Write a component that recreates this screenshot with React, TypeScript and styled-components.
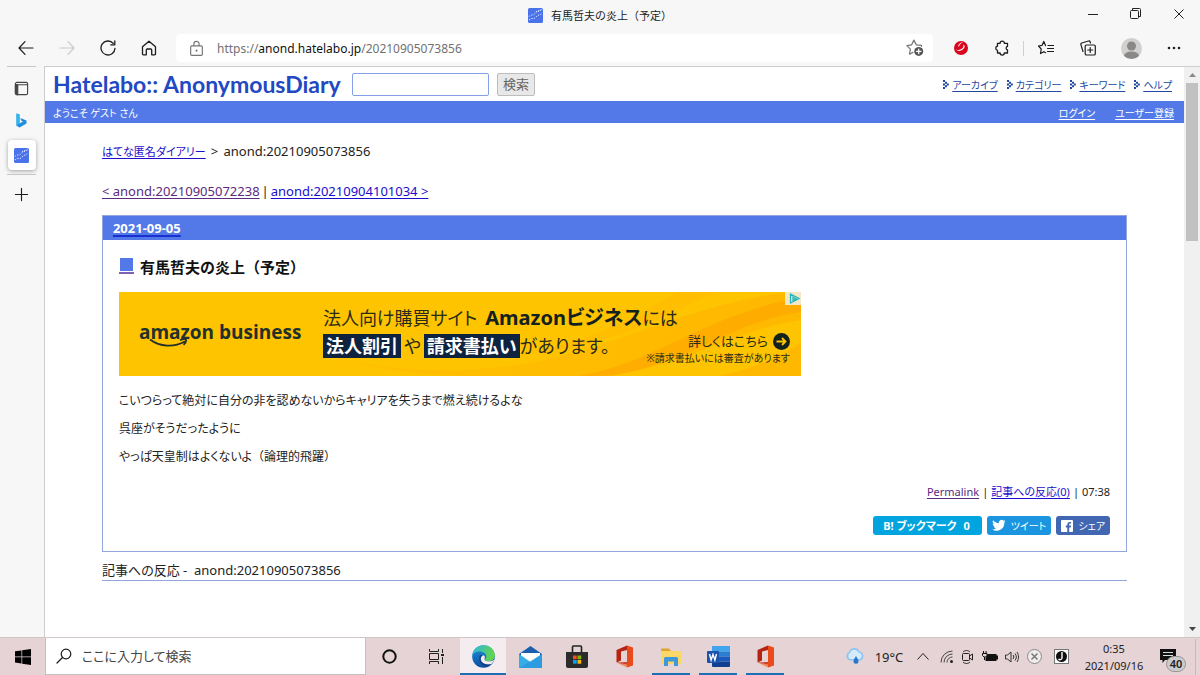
import React from "react";
import styled, { createGlobalStyle, css } from "styled-components";

const GlobalStyle = createGlobalStyle`
  *, *::before, *::after { box-sizing: border-box; }
  html, body { margin: 0; }
  body {
    font-family: "Noto Sans", "Noto Sans CJK JP", sans-serif;
    font-size: 13px;
    color: #222;
    font-feature-settings: "palt";
  }
  button, input {
    font: inherit;
    font-feature-settings: inherit;
    color: inherit;
  }
  svg { display: block; flex: none; }
  p, h1, h2, h3 { margin: 0; }
`;

const BLUE = "#5279e7";
const LINE = "#93a6dc";

/* ---------- browser frame ---------- */

const Screen = styled.div`
  display: flex;
  flex-direction: column;
  min-height: 100vh;
  background: #f7f7f7;
`;

const TitleBar = styled.header`
  display: grid;
  grid-template-columns: 1fr auto 1fr;
  align-items: center;
  height: 30px;
`;

const TabTitle = styled.div`
  grid-column: 2;
  display: flex;
  align-items: center;
  gap: 8px;
  font-size: 11px;
  font-feature-settings: normal;
`;

const WindowControls = styled.div`
  display: flex;
  justify-content: flex-end;
  padding-bottom: 3px;
`;

const WindowButton = styled.button`
  display: grid;
  place-items: center;
  width: 43px;
  height: 26px;
  padding: 0;
  border: 0;
  background: none;
`;

const Toolbar = styled.div`
  display: flex;
  align-items: center;
  height: 36px;
  padding: 0 5px;
`;

const ToolButton = styled.button<{ $w?: number }>`
  display: grid;
  place-items: center;
  flex: none;
  width: ${(p) => p.$w ?? 41}px;
  height: 28px;
  padding: 0;
  border: 0;
  background: none;
`;

const AddressBar = styled.div`
  display: flex;
  align-items: center;
  flex: 1;
  height: 28px;
  margin: 0 7px;
  padding: 0 9px 0 12px;
  border-radius: 4px;
  background: #fff;
`;

const Url = styled.div`
  flex: 1;
  padding-left: 12px;
  font-size: 12px;
  color: #717171;
  outline: 0;
  b { font-weight: 400; color: #111; }
`;

const Divider = styled.span`
  width: 1px;
  height: 15px;
  margin: 0 1px;
  background: #d0d0d0;
`;

const Body = styled.div`
  display: flex;
  flex: 1;
`;

const SideTabs = styled.nav`
  display: flex;
  flex-direction: column;
  align-items: center;
  flex: none;
  width: 43px;
`;

const SideRule = styled.span<{ $after: number }>`
  width: 29px;
  height: 1px;
  margin-bottom: ${(p) => p.$after}px;
  background: #c6c6c6;
`;

const SideTab = styled.button<{ $active?: boolean }>`
  display: grid;
  place-items: center;
  width: 28px;
  height: 32px;
  padding: 0;
  border: 0;
  border-radius: 4px;
  background: none;
  ${(p) =>
    p.$active &&
    css`
      height: 30px;
      margin: 4px 0;
      background: #fff;
      box-shadow: 0 1px 4px rgba(0, 0, 0, 0.35);
    `}
`;

/* ---------- web page ---------- */

const Page = styled.main`
  flex: 1;
  min-width: 0;
  margin-left: 1px;
  border-top: 1px solid #cdcdcd;
  border-left: 1px solid #cdcdcd;
  background: #fff;
`;

const SiteHeader = styled.div`
  display: flex;
  align-items: center;
  height: 34px;
  padding: 0 12px 0 8px;
`;

const Logo = styled.h1`
  min-width: 288px;
  font-family: Lato, sans-serif;
  font-size: 23px;
  line-height: 32px;
  font-weight: 700;
  color: #2248c2;
  white-space: nowrap;
`;

const SearchForm = styled.form`
  display: flex;
  gap: 8px;
  margin-left: 11px;
`;

const SearchInput = styled.input`
  width: 137px;
  height: 23px;
  padding: 0 4px;
  border: 1px solid #84a0ea;
  border-radius: 2px;
  background: #fff;
`;

const SearchButton = styled.button`
  height: 23px;
  padding: 0 5px;
  border: 1px solid #bdbdbd;
  border-radius: 2px;
  background: #e8e8e8;
  color: #666;
  line-height: 20px;
`;

const Menu = styled.nav`
  display: flex;
  gap: 8px;
  margin-left: auto;
  font-size: 10px;
`;

const MenuItem = styled.span`
  display: flex;
  align-items: center;
  gap: 3px;
`;

const Link = styled.a<{ $tone?: "blue" | "navy" | "visited" | "white" }>`
  color: ${(p) =>
    ({ blue: "#1a0dcc", navy: "#23489f", visited: "#5a2a80", white: "#fff" })[p.$tone ?? "blue"]};
  text-decoration: underline;
  text-underline-offset: 2px;
`;

const WelcomeBar = styled.div`
  display: flex;
  align-items: center;
  gap: 20px;
  height: 22px;
  padding: 0 10px 0 8px;
  background: ${BLUE};
  color: #fff;
  font-size: 10px;
  span { margin-right: auto; }
`;

const Content = styled.div`
  padding: 18px 5% 24px;
`;

const TextLine = styled.div<{ $after: number }>`
  display: flex;
  align-items: center;
  gap: 2px;
  height: 20px;
  margin-bottom: ${(p) => p.$after}px;
  white-space: pre;
`;

const Crumb = styled.span`
  padding-right: 3px;
  font-size: 11px;
`;

const Day = styled.section`
  border: 1px solid ${LINE};
`;

const DayTitle = styled.h2`
  display: flex;
  align-items: center;
  height: 24px;
  padding: 0 10px;
  background: ${BLUE};
  font-size: 13px;
  a {
    color: #fff;
    text-decoration: underline #1a2fd0 2px;
    text-underline-offset: 2px;
  }
`;

const Entry = styled.article`
  padding: 12px 16px 16px;
`;

const EntryTitle = styled.h3`
  display: flex;
  align-items: center;
  gap: 6px;
  height: 28px;
  margin-bottom: 12px;
  font-size: 15px;
  font-weight: 700;
  color: #111;
  font-feature-settings: normal;
`;

const Marker = styled.a`
  display: block;
  width: 15px;
  padding: 0 1px 1px;
  border-bottom: 2px solid #7d63b8;
  &::before {
    content: "";
    display: block;
    height: 13px;
    background: ${BLUE};
  }
`;

const Paragraph = styled.p`
  font-size: 12px;
  line-height: 28px;
`;

const FullWidth = styled.span`
  font-feature-settings: normal;
`;

const EntryFooter = styled.div`
  display: flex;
  justify-content: flex-end;
  align-items: center;
  gap: 3px;
  height: 20px;
  margin: 10px 0 15px;
  font-size: 11px;
`;

const ShareRow = styled.div`
  display: flex;
  justify-content: flex-end;
  gap: 5px;
`;

const ShareButton = styled.button<{ $bg: string; $strong?: boolean }>`
  display: flex;
  align-items: center;
  gap: 5px;
  height: 19px;
  padding: 0 ${(p) => (p.$strong ? 10 : 5)}px;
  border: 0;
  border-radius: 3px;
  background: ${(p) => p.$bg};
  color: #fff;
  font-size: ${(p) => (p.$strong ? 11 : 10)}px;
  font-weight: ${(p) => (p.$strong ? 700 : 400)};
  line-height: 18px;
  white-space: nowrap;
`;

const Count = styled.span`
  padding: 0 2px;
`;

const Reactions = styled.div`
  display: flex;
  align-items: center;
  height: 29px;
  padding-top: 7px;
  border-bottom: 1px solid ${LINE};
  white-space: pre;
`;

/* ---------- banner ---------- */

const Banner = styled.a`
  position: relative;
  display: grid;
  grid-template-columns: 204px 1fr;
  align-items: center;
  width: 100%;
  max-width: 682px;
  height: 84px;
  margin-bottom: 11px;
  background: #ffc400;
  color: #2a2b1a;
  text-decoration: none;
  white-space: nowrap;
`;

const BannerArt = styled.svg`
  position: absolute;
  inset: 0;
  width: 100%;
  height: 100%;
`;

const BrandMark = styled.div`
  position: relative;
  padding: 0 0 4px 20px;
  font-family: "Open Sans", sans-serif;
  font-size: 19px;
  line-height: 28px;
  font-weight: 700;
  color: #23302c;
`;

const Smile = styled.svg`
  position: absolute;
  left: 30px;
  top: 20px;
`;

const Copy = styled.div`
  position: relative;
  padding: 0 11px 4px 0;
`;

const CopyLine = styled.div`
  display: flex;
  align-items: center;
  height: 28px;
  font-size: 18px;
  line-height: 26px;
  b { padding-left: 8px; font-size: 20px; color: #14221f; }
`;

const Chip = styled.strong`
  padding: 0 3px;
  background: #0d2340;
  color: #fff;
  line-height: 24px;
`;

const Particle = styled.span`
  padding: 0 3px;
`;

const CallToAction = styled.div`
  display: flex;
  flex-direction: column;
  align-items: flex-end;
  align-self: flex-start;
  margin-left: auto;
  font-size: 10px;
  line-height: 16px;
`;

const CtaLink = styled.span`
  display: flex;
  align-items: center;
  gap: 5px;
  font-size: 13px;
  line-height: 18px;
`;

const AdChoice = styled.svg`
  position: absolute;
  right: 0;
  top: 0;
`;

/* ---------- scroll bar ---------- */

const ScrollBar = styled.div`
  display: flex;
  flex-direction: column;
  align-items: center;
  justify-content: space-between;
  flex: none;
  width: 16px;
  padding: 6px 0;
  border-top: 1px solid #cdcdcd;
  background: #f0f0f0;
`;

const Thumb = styled.span`
  flex: 0 1 158px;
  width: 12px;
  margin: 6px 0 auto;
  background: #c1c1c1;
`;

/* ---------- task bar ---------- */

const TaskBar = styled.footer`
  display: flex;
  align-items: stretch;
  height: 38px;
  border-top: 1px solid #cfc6c8;
  background: #e5d3d5;
`;

const Tile = styled.button<{ $state?: "open" | "active" }>`
  display: grid;
  place-items: center;
  flex: none;
  width: 46px;
  margin-right: 1px;
  padding: 0;
  border: 0;
  background: ${(p) => (p.$state === "active" ? "#f4ecee" : "none")};
  ${(p) =>
    p.$state &&
    css`
      background-image: linear-gradient(#1f6fb5, #1f6fb5);
      background-repeat: no-repeat;
      background-position: center bottom;
      background-size: ${p.$state === "active" ? "100%" : "38px"} 2px;
    `}
`;

const TaskSearch = styled.label`
  display: flex;
  align-items: center;
  gap: 10px;
  flex: 0 1 321px;
  margin-left: -2px;
  padding: 0 10px;
  border: 1px solid #c4bfc0;
  border-top: 0;
  background: #fff;
`;

const TaskInput = styled.input`
  flex: 1;
  min-width: 0;
  padding: 0;
  border: 0;
  outline: 0;
  &::placeholder { color: #444; opacity: 1; }
`;

const Tray = styled.div`
  display: flex;
  align-items: center;
  margin-left: auto;
  padding-right: 4px;
`;

const TrayButton = styled.button<{ $w: number }>`
  display: flex;
  align-items: center;
  justify-content: center;
  gap: 10px;
  flex: none;
  width: ${(p) => p.$w}px;
  height: 36px;
  padding: 0;
  border: 0;
  background: none;
  white-space: nowrap;
`;

const Clock = styled.time`
  width: 72px;
  font-size: 11px;
  line-height: 17px;
  text-align: center;
`;

const Notice = styled.button`
  position: relative;
  width: 46px;
  height: 36px;
  padding: 0 0 0 10px;
  border: 0;
  border-right: 1px solid #c9b8ba;
  background: none;
`;

const Badge = styled.span`
  position: absolute;
  left: 16px;
  top: 17px;
  width: 20px;
  border: 1px solid #999;
  border-radius: 8px;
  background: #ccc;
  font-size: 11px;
  line-height: 14px;
  font-weight: 600;
`;

/* ---------- icons ---------- */

const Favicon = () => (
  <svg width="15" height="15" viewBox="0 0 15 15">
    <rect width="15" height="15" rx="1.5" fill="#4a72ea" />
    <g fill="none" stroke="#dbe4ff" strokeWidth="1" strokeDasharray="1.4 1.200">
      <path d="M1 8.500c2-3 4 0 6-3s4-1 7-4" />
      <path d="M1 12c3-3 5 0 7-3s4-1 6-4" />
      <path d="M8 4c2-2 3-1 5.500-2.500" />
    </g>
  </svg>
);

const Stroke = ({
  d,
  size = 16,
  color = "#1c1c1c",
  w = 1.2,
  children,
}: {
  d: string;
  size?: number;
  color?: string;
  w?: number;
  children?: React.ReactNode;
}) => (
  <svg width={size} height={size} viewBox="0 0 16 16" fill="none" stroke={color} strokeWidth={w} strokeLinecap="round" strokeLinejoin="round">
    <path d={d} />
    {children}
  </svg>
);

const OfficeIcon = () => (
  <svg width="19" height="23" viewBox="0 0 19 23">
    <path d="M12 .5 1.500 5v12.500l4.500-2V6.600l6-1.700z" fill="#b32413" />
    <path d="M12 .5 18 2.500v18l-6 2z" fill="#ea4b1c" />
    <path d="M1.500 17.500 12 22.500v-4z" fill="#f08a64" />
    <path d="m1.500 17.500 10.500-.6v2.600z" fill="#c9412c" />
  </svg>
);

const MenuMark = () => (
  <svg width="7" height="9" viewBox="0 0 7 9" fill="#23489f">
    <path d="M1 0h2v2H1zM3 1.800h2v2H3zM4.800 3.500h2v2h-2zM3 5.200h2v2H3zM1 7h2v2H1zM1 3.500h2v2H1z" />
  </svg>
);

export default function App() {
  return (
    <Screen>
      <GlobalStyle />
      <TitleBar>
        <TabTitle>
          <Favicon />
          有馬哲夫の炎上（予定）
        </TabTitle>
        <WindowControls>
          <WindowButton aria-label="最小化">
            <svg width="10" height="10"><path d="M0 5.500h10" stroke="#222" /></svg>
          </WindowButton>
          <WindowButton aria-label="元に戻す">
            <svg width="11" height="11" fill="none" stroke="#222">
              <rect x=".5" y="2.500" width="8" height="8" rx="1" />
              <path d="M2.500 2.500V.5h7a1 1 0 0 1 1 1v7h-2" />
            </svg>
          </WindowButton>
          <WindowButton aria-label="閉じる">
            <svg width="10" height="10"><path d="m.5.5 9 9m0-9-9 9" stroke="#222" /></svg>
          </WindowButton>
        </WindowControls>
      </TitleBar>

      <Toolbar>
        <ToolButton aria-label="戻る"><Stroke d="M15 8H1m6-6.300L1 8l6 6.300" /></ToolButton>
        <ToolButton aria-label="進む"><Stroke color="#c9c9c9" d="M1 8h14M9 1.700 15 8l-6 6.300" /></ToolButton>
        <ToolButton aria-label="更新"><Stroke w={1.3} d="M15 8.300a7 7 0 1 1-1.800-5M14.800.8v4h-4" /></ToolButton>
        <ToolButton aria-label="ホーム"><Stroke w={1.3} d="M1.500 6.800 8 1.200l6.500 5.600v7.200a.8.8 0 0 1-.8.8h-3V10a1 1 0 0 0-1-1H6.300a1 1 0 0 0-1 1v4.800h-3a.8.8 0 0 1-.8-.8z" /></ToolButton>
        <AddressBar>
          <Stroke color="#777" w={1.1} size={17} d="M3.500 5.500h9a1 1 0 0 1 1 1v7a1 1 0 0 1-1 1h-9a1 1 0 0 1-1-1v-7a1 1 0 0 1 1-1zM5.500 5.500V3.800a2.500 2.500 0 0 1 5 0v1.700">
            <circle cx="8" cy="10" r=".4" />
          </Stroke>
          <Url role="textbox" aria-label="アドレス" contentEditable suppressContentEditableWarning spellCheck={false}>
            https://<b>anond.hatelabo.jp</b>/20210905073856
          </Url>
          <Stroke color="#777" size={18} w={1.1} d="M13.800 6.500v-.8L9.200 5.200 7 1 5 5.200.8 5.900 3.900 9l-.8 4.500 3-1.600">
            <circle cx="11.300" cy="11" r="4" fill="#555" stroke="none" />
            <path d="M11.300 9v4m-2-2h4" stroke="#fff" />
          </Stroke>
        </AddressBar>
        <ToolButton aria-label="セキュリティ">
          <svg width="14" height="14" viewBox="0 0 14 14">
            <circle cx="7" cy="7" r="7" fill="#d9051d" />
            <path d="M1.500 7.500C3 9.500 5 9.500 7 8.300 9.500 6.800 10 5 9 3.500c2 .8 2.200 2.500.5 4.300C7 10.500 3.500 11 1.500 7.500z" fill="#fff" />
            <path d="M4 5.500C4.500 3 6.500 1.500 9 1c-1.800 1.200-3.500 2.500-4 4.500z" fill="#fff" />
          </svg>
        </ToolButton>
        <ToolButton aria-label="拡張機能">
          <Stroke w={1.3} d="M3.500 3.300h2.600a2.100 2.100 0 0 1 4.200 0h3.200v3.100a1.800 1.800 0 0 0 0 3.500v3.100h-3.200a2.100 2.100 0 0 1-4.200 0H3.500v-2.700a2.200 2.200 0 0 1 0-4.300z" />
        </ToolButton>
        <Divider />
        <ToolButton $w={42} aria-label="お気に入り">
          <Stroke w={1.2} d="M7.500 5.600 5.800 1.400 4 5.400l-3.500.6 2.700 3-.7 4.600 3.300-1.900 1.700 1M10 5.500h5.500M9.500 8.500h6M9.500 11.500h6" />
        </ToolButton>
        <ToolButton $w={42} aria-label="コレクション">
          <Stroke w={1.2} d="M6.500 5h7.500a1.300 1.300 0 0 1 1.300 1.300v7.400A1.300 1.300 0 0 1 14 15H6.500a1.300 1.300 0 0 1-1.300-1.300V6.300A1.300 1.300 0 0 1 6.500 5zM10.200 7.500v5M7.700 10h5M3 11.500 .9 4.600a1.300 1.300 0 0 1 .9-1.600L8.500 1a1.300 1.300 0 0 1 1.600.8l.4 1.200" />
        </ToolButton>
        <ToolButton $w={44} aria-label="プロフィール">
          <svg width="21" height="21" viewBox="0 0 21 21">
            <clipPath id="avatar"><circle cx="10.500" cy="10.500" r="10.500" /></clipPath>
            <g clipPath="url(#avatar)">
              <rect width="21" height="21" fill="#d2d0ce" />
              <circle cx="10.500" cy="8" r="4.500" fill="#8a8886" />
              <ellipse cx="10.500" cy="18" rx="7.500" ry="4.500" fill="#8a8886" />
            </g>
          </svg>
        </ToolButton>
        <ToolButton $w={42} aria-label="設定">
          <svg width="14" height="4" fill="#222"><circle cx="2" cy="2" r="1.300" /><circle cx="7" cy="2" r="1.300" /><circle cx="12" cy="2" r="1.300" /></svg>
        </ToolButton>
      </Toolbar>

      <Body>
        <SideTabs>
          <SideRule $after={5} />
          <SideTab aria-label="タブ操作">
            <Stroke size={15} w={1.2} color="#444" d="M3 1.500h10A1.500 1.500 0 0 1 14.500 3v10a1.500 1.500 0 0 1-1.500 1.500H3A1.500 1.500 0 0 1 1.500 13V3A1.500 1.500 0 0 1 3 1.500zM1.500 4h13">
              <path d="M1.500 4h2.500v10.500H3L1.500 13z" fill="#444" />
            </Stroke>
          </SideTab>
          <SideTab aria-label="Bing">
            <svg width="11" height="15" viewBox="0 0 11 15">
              <path d="M.5.5 3.500 1.600v8.900L7 8.600 5.300 7.800 4.200 5l6.300 2.400v3.200L3.600 14.500.5 12.800z" fill="#1f8fe0" />
              <path d="M.5.5 3.500 1.600v8.900L.5 12.800z" fill="#2fb5ea" />
            </svg>
          </SideTab>
          <SideTab $active aria-label="有馬哲夫の炎上（予定）"><Favicon /></SideTab>
          <SideRule $after={3} />
          <SideTab aria-label="新しいタブ"><Stroke size={15} d="M8 1.500v13M1.500 8h13" /></SideTab>
        </SideTabs>

        <Page>
          <SiteHeader>
            <Logo>Hatelabo:: AnonymousDiary</Logo>
            <SearchForm onSubmit={(e) => e.preventDefault()}>
              <SearchInput type="text" aria-label="検索" />
              <SearchButton type="submit">検索</SearchButton>
            </SearchForm>
            <Menu>
              {["アーカイブ", "カテゴリー", "キーワード", "ヘルプ"].map((label) => (
                <MenuItem key={label}>
                  <MenuMark />
                  <Link href="#" $tone="navy">{label}</Link>
                </MenuItem>
              ))}
            </Menu>
          </SiteHeader>
          <WelcomeBar>
            <span>ようこそ ゲスト さん</span>
            <Link href="#" $tone="white">ログイン</Link>
            <Link href="#" $tone="white">ユーザー登録</Link>
          </WelcomeBar>

          <Content>
            <TextLine $after={20}>
              <Crumb><Link href="#">はてな匿名ダイアリー</Link></Crumb>
              <span>&gt;</span>
              <span> anond:20210905073856</span>
            </TextLine>
            <TextLine $after={14}>
              <Link href="#" $tone="visited">&lt; anond:20210905072238</Link>
              <span>|</span>
              <Link href="#">anond:20210904101034 &gt;</Link>
            </TextLine>

            <Day>
              <DayTitle><a href="#">2021-09-05</a></DayTitle>
              <Entry>
                <EntryTitle>
                  <Marker href="#" aria-label="この記事へのリンク" />
                  有馬哲夫の炎上（予定）
                </EntryTitle>

                <Banner href="#">
                  <BannerArt viewBox="0 0 682 84" preserveAspectRatio="none">
                    <defs>
                      <linearGradient id="wave" x1="0" x2="1">
                        <stop offset="0" stopColor="#ffb700" />
                        <stop offset="1" stopColor="#ff9c00" />
                      </linearGradient>
                    </defs>
                    <path d="M220 66c60 16 150 18 230-4S600 4 682 0v28C600 40 560 84 460 84H340c-50-2-90-8-120-18z" fill="url(#wave)" opacity=".3" />
                    <path d="M460 84C540 70 590 20 682 6v14c-70 10-110 50-190 64z" fill="#ffa000" opacity=".5" />
                    <path d="M400 62C480 50 520 20 560 0h38c-50 20-100 56-198 62z" fill="#ffb000" opacity=".3" />
                    <path d="M600 84c30-6 60-18 82-34v34z" fill="#ffa800" opacity=".4" />
                  </BannerArt>
                  <BrandMark>
                    amazon business
                    <Smile width="44" height="10" viewBox="0 0 44 10" fill="none" stroke="#23302c" strokeWidth="1.800">
                      <path d="M1 1.500c10 7.500 24 8 35 2M31 2.200c3-1 5.500-1 6-.4s-.6 3-2.500 5" />
                    </Smile>
                  </BrandMark>
                  <Copy>
                    <CopyLine>法人向け購買サイト<b>Amazonビジネス</b>には</CopyLine>
                    <CopyLine>
                      <Chip>法人割引</Chip>
                      <Particle>や</Particle>
                      <Chip>請求書払い</Chip>
                      があります。
                      <CallToAction>
                        <CtaLink>
                          詳しくはこちら
                          <svg width="17" height="17" viewBox="0 0 17 17">
                            <circle cx="8.500" cy="8.500" r="8.500" fill="#14221f" />
                            <path d="M3.500 8.500h9M9 5l3.500 3.500L9 12" fill="none" stroke="#ffc400" strokeWidth="1.800" />
                          </svg>
                        </CtaLink>
                        ※請求書払いには審査があります
                      </CallToAction>
                    </CopyLine>
                  </Copy>
                  <AdChoice width="16" height="13" viewBox="0 0 16 13">
                    <rect width="16" height="13" fill="#f3e7c6" />
                    <path d="M5.500 2v9l8.500-4.500zM8 5v3.500l3-1.800z" fill="none" stroke="#21b6c0" strokeWidth="1.300" />
                  </AdChoice>
                </Banner>

                <Paragraph>こいつらって絶対に自分の非を認めないからキャリアを失うまで燃え続けるよな</Paragraph>
                <Paragraph>呉座がそうだったように</Paragraph>
                <Paragraph>やっぱ天皇制はよくないよ<FullWidth>（論理的飛躍）</FullWidth></Paragraph>

                <EntryFooter>
                  <Link href="#" $tone="visited">Permalink</Link>
                  <span>|</span>
                  <Link href="#">記事への反応(0)</Link>
                  <span>|</span>
                  <span>07:38</span>
                </EntryFooter>
                <ShareRow>
                  <ShareButton $bg="#00a4de" $strong>B! ブックマーク <Count>0</Count></ShareButton>
                  <ShareButton $bg="#1b95e0">
                    <svg width="14" height="13" viewBox="0 0 24 22" fill="#fff">
                      <path d="M23.500 3.500c-.8.400-1.700.6-2.700.8 1-.6 1.700-1.500 2-2.600-.9.500-1.900.9-3 1.100a4.700 4.700 0 0 0-8 4.300C7.900 6.900 4.400 5 2 2.100a4.700 4.700 0 0 0 1.500 6.300c-.8 0-1.500-.2-2.200-.6 0 2.300 1.600 4.200 3.800 4.700-.7.200-1.400.2-2.100.1.600 1.900 2.300 3.200 4.400 3.300A9.500 9.500 0 0 1 .5 17.800a13.300 13.300 0 0 0 20.600-11.900c.9-.7 1.700-1.500 2.400-2.400z" />
                    </svg>
                    ツイート
                  </ShareButton>
                  <ShareButton $bg="#4267b2">
                    <svg width="12" height="12" viewBox="0 0 12 12">
                      <rect width="12" height="12" rx="1" fill="#fff" />
                      <path d="M8.200 12V7.400h1.600L10 5.600H8.200V4.500c0-.5.200-.9.900-.9h1V2H8.700C7 2 6.300 3 6.300 4.300v1.300H4.800v1.800h1.500V12z" fill="#4267b2" />
                    </svg>
                    シェア
                  </ShareButton>
                </ShareRow>
              </Entry>
            </Day>
            <Reactions>記事への反応 -  anond:20210905073856</Reactions>
          </Content>
        </Page>

        <ScrollBar>
          <svg width="7" height="4"><path d="M0 4 3.500 0 7 4z" fill="#8a8a8a" /></svg>
          <Thumb />
          <svg width="7" height="4"><path d="M0 0h7L3.500 4z" fill="#444" /></svg>
        </ScrollBar>
      </Body>

      <TaskBar>
        <Tile aria-label="スタート">
          <svg width="16" height="16" viewBox="0 0 16 16" fill="#000">
            <path d="M0 2.300 6.500 1.400v6.200H0zM7.200 1.300 16 0v7.600H7.200zM0 8.300h6.500v6.200L0 13.600zM7.200 8.300H16V16l-8.800-1.300z" />
          </svg>
        </Tile>
        <TaskSearch>
          <Stroke size={16} d="M6.500 9.500 1 15"><circle cx="10" cy="6" r="4.800" /></Stroke>
          <TaskInput type="text" aria-label="検索" placeholder="ここに入力して検索" />
        </TaskSearch>
        <Tile aria-label="Cortana">
          <svg width="15" height="15"><circle cx="7.500" cy="7.500" r="6.200" fill="none" stroke="#111" strokeWidth="2" /></svg>
        </Tile>
        <Tile aria-label="タスクビュー">
          <svg width="17" height="15" fill="none" stroke="#222">
            <path d="M1.500 0v2.500h9V0M1.500 15v-2.500h9V15M1.500 4.500h9v6h-9zM14.500 0v4M14.500 8v7" />
            <rect x="13" y="5" width="3" height="2" fill="#222" stroke="none" />
          </svg>
        </Tile>
        <Tile $state="active" aria-label="Edge">
          <svg width="23" height="23" viewBox="0 0 24 24">
            <defs>
              <linearGradient id="edgeTop" x1="0" x2="1" y2=".3">
                <stop offset="0" stopColor="#2cb5e8" />
                <stop offset="1" stopColor="#62d44d" />
              </linearGradient>
              <linearGradient id="edgeBody" x1="0" y1="0" x2="0" y2="1">
                <stop offset="0" stopColor="#1e90dc" />
                <stop offset="1" stopColor="#0c4fa0" />
              </linearGradient>
            </defs>
            <circle cx="12" cy="12" r="11.800" fill="url(#edgeBody)" />
            <path d="M.3 11C1 4.500 6 .2 12 .2c7 0 11.800 5 11.800 10.600 0 4-3 6.200-6.300 6.200-2.500 0-4-1-4-1.800s1.400-1 1.400-3.200c0-2.800-3-5.300-7-5.300C4 6.700 1.300 8.500.3 11z" fill="url(#edgeTop)" />
            <path d="M8 11.500c-1.500 5 1.500 10.500 7 11 2-.4 4-1.500 5.500-3-5 2-11-.5-11.300-5 0-1.700 1-3 2.500-3.700-1.500-.6-3 0-3.700.7z" fill="#123f86" />
            <path d="M9.200 14.500c0-1.700 1-3 2.500-3.700 1.800.5 2 2.200 1.500 3.200-.6 1.300.6 3 4.300 3 2.300 0 4.500-.7 5.800-2 -.6 1.800-1.500 3.300-2.800 4.500-5 2-11-.5-11.300-5z" fill="#f4ecee" />
          </svg>
        </Tile>
        <Tile aria-label="メール">
          <svg width="23" height="22" viewBox="0 0 23 22">
            <path d="M0 8 11.500 0 23 8v3H0z" fill="#1a5fae" />
            <path d="M2 7h19v9H2z" fill="#fff" />
            <path d="M0 8v14h23V8l-11.500 8z" fill="#35aee8" />
            <path d="M0 22 23 8v14z" fill="#2590d8" opacity=".6" />
          </svg>
        </Tile>
        <Tile aria-label="Microsoft Store">
          <svg width="22" height="23" viewBox="0 0 22 23">
            <path d="M6.500 7V2a1 1 0 0 1 1-1h7a1 1 0 0 1 1 1v5" fill="none" stroke="#222" strokeWidth="1.600" />
            <path d="M0 7h22v14a2 2 0 0 1-2 2H2a2 2 0 0 1-2-2z" fill="#2b2b2b" />
            <path d="M7 10.500h3.700v3.700H7z" fill="#f25022" />
            <path d="M11.500 10.500h3.700v3.700h-3.700z" fill="#7fba00" />
            <path d="M7 15h3.700v3.700H7z" fill="#00a4ef" />
            <path d="M11.500 15h3.700v3.700h-3.700z" fill="#ffb900" />
          </svg>
        </Tile>
        <Tile aria-label="Office"><OfficeIcon /></Tile>
        <Tile $state="open" aria-label="エクスプローラー">
          <svg width="20" height="18" viewBox="0 0 20 18">
            <path d="M0 1.500A1 1 0 0 1 1 .5h7l2 2.500H0z" fill="#e0a32e" />
            <path d="M0 3h19a1 1 0 0 1 1 1v12H0z" fill="#fbd766" />
            <path d="M3 18V10.500A1.500 1.500 0 0 1 4.500 9h11a1.500 1.500 0 0 1 1.500 1.500V18h-4v-4.500H7V18z" fill="#3f97dc" />
          </svg>
        </Tile>
        <Tile $state="open" aria-label="Word">
          <svg width="23" height="21" viewBox="0 0 23 21">
            <path d="M5 0h18v5.500H5z" fill="#41a5ee" />
            <path d="M5 5.500h18v5H5z" fill="#2b7cd3" />
            <path d="M5 10.500h18v5H5z" fill="#185abd" />
            <path d="M5 15.500h18V20a1 1 0 0 1-1 1H6a1 1 0 0 1-1-1z" fill="#103f91" />
            <rect y="5" width="12" height="12" rx="1" fill="#1b52ad" />
            <path d="m2.500 8 1.600 6L6 8.500 7.900 14l1.600-6" fill="none" stroke="#fff" strokeWidth="1.400" />
          </svg>
        </Tile>
        <Tile $state="open" aria-label="Office"><OfficeIcon /></Tile>

        <Tray>
          <TrayButton $w={74} aria-label="天気 19°C">
            <svg width="20" height="17" viewBox="0 0 20 17">
              <path d="M5 12.500A4.500 4.500 0 0 1 4 4a5.500 5.500 0 0 1 10.400-.5A4.600 4.600 0 0 1 15 12.500z" fill="#8fc4f0" />
              <path d="M5 11a3.500 3.500 0 0 1 0-6 4.500 4.500 0 0 1 8.500-.5 3.500 3.500 0 0 1 1.500 6.500z" fill="#d5ebfb" />
              <path d="M11 8c1.500 2.500 2.500 3.800 2.500 5.200a2.500 2.500 0 0 1-5 0C8.500 11.800 9.500 10.500 11 8z" fill="#2877cf" />
            </svg>
            19°C
          </TrayButton>
          <TrayButton $w={24} aria-label="隠れているインジケーター"><svg width="12" height="7"><path d="m.5 6.500 5.500-6 5.500 6" fill="none" stroke="#222" /></svg></TrayButton>
          <TrayButton $w={22} aria-label="ネットワーク">
            <svg width="13" height="13" fill="none" stroke="#444">
              <path d="M1 12.500A11.500 11.500 0 0 1 12.500 1M4 12.500A8.500 8.500 0 0 1 12.500 4M7 12.500A5.500 5.500 0 0 1 12.500 7" />
              <circle cx="11.500" cy="11.500" r="1.500" fill="#222" stroke="none" />
            </svg>
          </TrayButton>
          <TrayButton $w={22} aria-label="会議">
            <svg width="12" height="14" fill="none" stroke="#222">
              <path d="M1 2C3 0 6 0 8 2M1 12c2 2 5 2 7 0" />
              <rect x=".5" y="3.500" width="7" height="7" rx="1" />
              <path d="m7.500 6 3-2v6l-3-2" />
            </svg>
          </TrayButton>
          <TrayButton $w={22} aria-label="バッテリー">
            <svg width="16" height="12">
              <path d="M5.500 3h9v1.500H16v4h-1.500V10H3.500V7z" fill="#111" />
              <path d="M1.500 0v2.500M4 0v2.500M.5 2.500h4.500v2L3.500 6h-1.500L.5 4.500zM2.500 6v3" fill="none" stroke="#111" />
            </svg>
          </TrayButton>
          <TrayButton $w={22} aria-label="音量">
            <svg width="14" height="12" fill="none" stroke="#333">
              <path d="M.5 4h2L6 1v10L2.500 8h-2zM8 4c1 1.300 1 2.700 0 4M10 2.500c1.800 2.300 1.800 4.700 0 7M12 1c2 3.300 2 6.700 0 10" />
            </svg>
          </TrayButton>
          <TrayButton $w={22} aria-label="切断">
            <svg width="15" height="15"><circle cx="7.500" cy="7.500" r="7" fill="#f1eded" stroke="#888" /><path d="m4.500 4.500 6 6m0-6-6 6" stroke="#777" strokeWidth="1.500" /></svg>
          </TrayButton>
          <TrayButton $w={33} aria-label="入力モード">
            <svg width="15" height="15"><rect x=".5" y=".5" width="14" height="14" fill="#fff" stroke="#777" /><circle cx="7.500" cy="7.500" r="5.500" fill="#111" /><path d="M8 3v6.200a2 2 0 0 1-3.500.8" fill="none" stroke="#fff" strokeWidth="1.400" /></svg>
          </TrayButton>
          <Clock>0:35<br />2021/09/16</Clock>
          <Notice aria-label="通知 40件">
            <svg width="16" height="16"><path d="M0 0h16v11H5l-2.500 3V11H0z" fill="#111" /><path d="M3 3.500h10M3 6.500h10" stroke="#ddd" /></svg>
            <Badge>40</Badge>
          </Notice>
        </Tray>
      </TaskBar>
    </Screen>
  );
}
